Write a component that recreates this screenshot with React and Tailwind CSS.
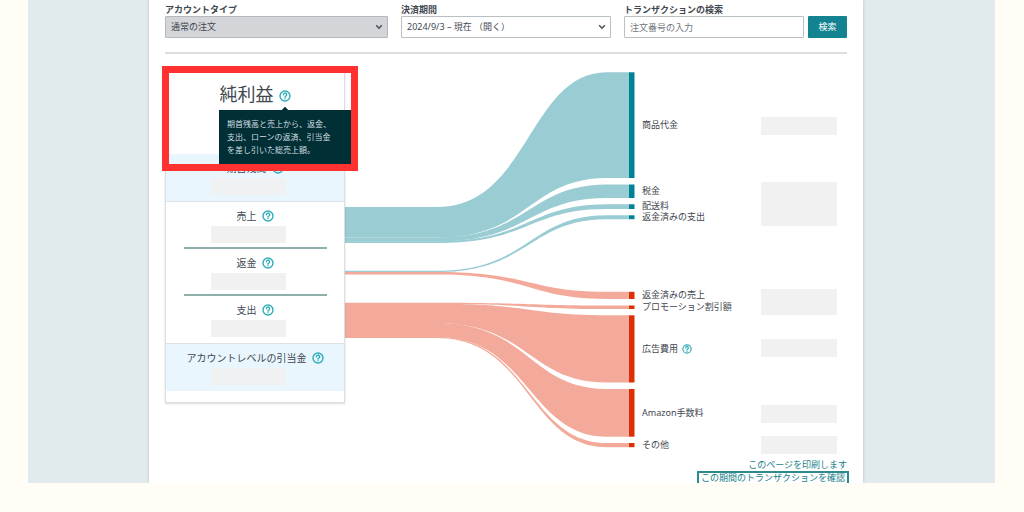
import React from "react";

const CURVE_START = 92;
const CURVE_MID = 184;
const CURVE_END = 262;
const BAR_X = 284;

const flows = [
  { color: "#99ccd3", bar: "#008296", from: [140, 170.6], to: [5.3, 111] },
  { color: "#99ccd3", bar: "#008296", from: [170.5, 174.5], to: [117.5, 131] },
  { color: "#99ccd3", bar: "#008296", from: [174.3, 176], to: [137.3, 142] },
  { color: "#99ccd3", bar: "#008296", from: [203.8, 205], to: [148.3, 152.2] },
  { color: "#f3aa9a", bar: "#dd2f03", from: [205, 207.5], to: [224.8, 232] },
  { color: "#f3aa9a", bar: "#dd2f03", from: [235.7, 236.9], to: [238.5, 242] },
  { color: "#f3aa9a", bar: "#dd2f03", from: [236.7, 256.2], to: [248.3, 315.5] },
  { color: "#f3aa9a", bar: "#dd2f03", from: [256.1, 270], to: [322, 369.7] },
  { color: "#f3aa9a", bar: "#dd2f03", from: [269.8, 271], to: [376, 380.2] },
];

function bandPath({ from, to }) {
  return [
    `M0 ${from[0]}H${CURVE_START}`,
    `C${CURVE_MID} ${from[0]} ${CURVE_MID} ${to[0]} ${CURVE_END} ${to[0]}H${BAR_X}`,
    `V${to[1]}H${CURVE_END}`,
    `C${CURVE_MID} ${to[1]} ${CURVE_MID} ${from[1]} ${CURVE_START} ${from[1]}H0Z`,
  ].join("");
}

const labels = [
  { text: "商品代金", size: "h-[106px]" },
  { text: "税金", size: "mt-[6px] h-[14px]" },
  { text: "配送料", size: "mt-[6px] h-[4px]" },
  { text: "返金済みの支出", size: "mt-[7px] h-[4px]" },
  { text: "返金済みの売上", size: "mt-[73px] h-[6px]" },
  { text: "プロモーション割引額", size: "mt-[7px] h-[4px]" },
  { text: "広告費用", size: "mt-[6px] h-[67px]", help: true },
  { text: "Amazon手数料", size: "mt-[7px] h-[47px]" },
  { text: "その他", size: "mt-[7px] h-[4px]" },
];

const amounts = [
  "mt-[50px] h-[18px]",
  "mt-[47px] h-[44px]",
  "mt-[63px] h-[26px]",
  "mt-[24px] h-[18px]",
  "mt-[48px] h-[18px]",
  "mt-[13px] h-[18px]",
];

function HelpIcon({ className }) {
  return (
    <svg viewBox="0 0 24 24" fill="none" stroke="#2fadb9" strokeWidth="2.8" strokeLinecap="round" className={className}>
      <circle cx="12" cy="12" r="10" />
      <path d="M8.9 9.4a3.2 3.2 0 1 1 4.7 2.8c-1.1.7-1.6 1.1-1.6 2.1M12 17.6v.1" />
    </svg>
  );
}

function Help({ label, size = "size-[12px]" }) {
  return (
    <button type="button" aria-label={label} className="shrink-0">
      <HelpIcon className={size} />
    </button>
  );
}

function Chevron() {
  return (
    <svg viewBox="0 0 8 6" fill="none" stroke="#46505a" strokeWidth="1.5" className="pointer-events-none absolute right-[5px] top-[8px] h-[6px] w-[8px]">
      <path d="M1.2 1.2L4 4.2L6.8 1.2" />
    </svg>
  );
}

function SummaryRow({ title, tinted, divider }) {
  return (
    <div className={tinted ? "flex h-[47px] flex-col items-center bg-[#e9f6fe] pt-[7px]" : "flex h-[47px] flex-col items-center pt-[7px]"}>
      <div className="flex h-[14px] items-center gap-[5px] text-[10px] leading-[14px]">
        <span>{title}</span>
        <Help label={title} />
      </div>
      <div className={tinted ? "mr-[14px] mt-[3px] h-[17px] w-[75px] bg-[#eff1f2]" : "mr-[14px] mt-[3px] h-[17px] w-[75px] bg-[#f1f1f1]"} />
      {divider && <div className="mt-auto h-[2px] w-[143px] bg-[#8fafad]" />}
    </div>
  );
}

export default function App() {
  return (
    <div className="min-h-screen bg-[#fffdf5] pl-[28px] pr-[29px] pb-[29px] font-['Noto_Sans','Noto_Sans_CJK_JP',sans-serif] text-[#3f4750]">
      <div className="overflow-hidden bg-[#e1eaec] pl-[121px] pr-[132px]">
        <main className="bg-white px-[16px] pt-[3px] shadow-[0_0_3px_rgba(0,0,0,0.18)]">
          <form className="grid grid-cols-[223fr_210fr_223fr] gap-[13px] text-[9px]" onSubmit={(e) => e.preventDefault()}>
            <div>
              <label htmlFor="account" className="block h-[13px] font-bold leading-[13px]">アカウントタイプ</label>
              <div className="relative">
                <select id="account" className="block h-[22px] w-full appearance-none rounded-[1px] border border-[#b3b9bd] bg-[#d3d5d9] px-[5px]">
                  <option>通常の注文</option>
                </select>
                <Chevron />
              </div>
            </div>
            <div>
              <label htmlFor="period" className="block h-[13px] font-bold leading-[13px]">決済期間</label>
              <div className="relative">
                <select id="period" className="block h-[22px] w-full appearance-none rounded-[1px] border border-[#b9c0c4] bg-white px-[5px]">
                  <option>2024/9/3 – 現在 （開く）</option>
                </select>
                <Chevron />
              </div>
            </div>
            <div>
              <label htmlFor="search" className="block h-[13px] font-bold leading-[13px]">トランザクションの検索</label>
              <div className="flex gap-[4px]">
                <input id="search" type="text" placeholder="注文番号の入力" className="h-[22px] min-w-0 flex-1 rounded-[1px] border border-[#b9c0c4] bg-white px-[5px] placeholder:text-[#70777d]" />
                <button type="submit" className="h-[22px] w-[39px] rounded-[1px] bg-[#148391] text-white">検索</button>
              </div>
            </div>
          </form>

          <hr className="mt-[14px] h-[2px] border-0 bg-[#dcdddd]" />

          <div className="mt-[13px] flex items-start">
            <section className="relative w-[180px] shrink-0 border border-[#dcdfe1] bg-white pb-[11px] shadow-[0_1px_2px_rgba(0,0,0,0.15)]">
              <div className="flex h-[86px] items-start justify-center pt-[12px]">
                <h1 className="text-[18px] leading-[28px]">純利益</h1>
                <div className="ml-[5px] mt-[10px] flex">
                  <Help label="純利益" />
                </div>
              </div>
              <SummaryRow title="期首残高" tinted />
              <div className="border-y border-[#dde2e6]">
                <SummaryRow title="売上" divider />
                <SummaryRow title="返金" divider />
                <SummaryRow title="支出" />
              </div>
              <SummaryRow title="アカウントレベルの引当金" tinted />

              <div role="tooltip" className="absolute left-[53px] top-[42px] h-[56px] w-[134px] bg-[#002f36] pl-[8px] pt-[7px] text-[8px] leading-[13px] text-[#d5dfe0]">
                <span className="absolute left-[63px] top-[-2px] size-[6px] rotate-45 bg-[#002f36]" />
                期首残高と売上から、返金、
                <br />
                支出、ローンの返済、引当金
                <br />
                を差し引いた総売上額。
              </div>
              <div className="pointer-events-none absolute left-[-4px] top-[-2px] h-[105px] w-[196px] border-[7px] border-[#ff3131]" />
            </section>

            <svg viewBox="0 0 290 384" preserveAspectRatio="none" className="h-[384px] min-w-0 flex-1">
              {flows.map((flow, i) => (
                <g key={i}>
                  <path d={bandPath(flow)} fill={flow.color} />
                  <rect x={BAR_X} y={flow.to[0]} width="5.5" height={flow.to[1] - flow.to[0]} fill={flow.bar} />
                </g>
              ))}
            </svg>

            <ul className="w-[126px] shrink-0 pl-[7px] pt-[5px] text-[9px] leading-[10px]">
              {labels.map((item) => (
                <li key={item.text} className={`flex items-center gap-[4px] whitespace-nowrap ${item.size}`}>
                  {item.text}
                  {item.help && <Help label={item.text} size="size-[10px]" />}
                </li>
              ))}
            </ul>

            <div className="mr-[10px] flex h-[392px] w-[76px] shrink-0 flex-col">
              {amounts.map((size) => (
                <div key={size} className={`shrink-0 bg-[#f1f1f1] ${size}`} />
              ))}
            </div>
          </div>

          <nav className="flex flex-col items-end text-[9px] leading-[12px] text-[#1a8089]">
            <a href="#print">このページを印刷します</a>
            <a href="#transactions" className="mr-[-2px] border-2 border-b-0 border-[#2f8a8c] px-[2px] leading-[10px]">この期間のトランザクションを確認</a>
          </nav>
        </main>
      </div>
    </div>
  );
}
